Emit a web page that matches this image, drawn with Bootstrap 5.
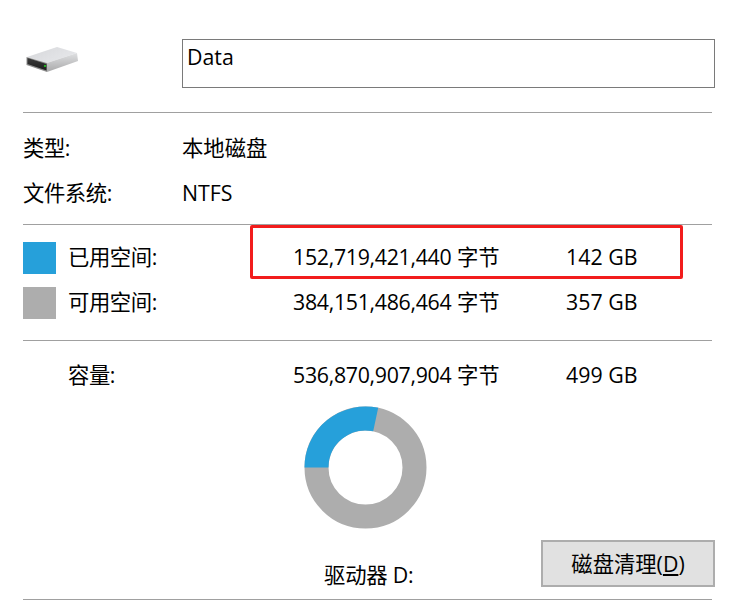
<!DOCTYPE html>
<html lang="zh">
<head>
<meta charset="utf-8">
<title>Data</title>
<link href="https://cdn.jsdelivr.net/npm/bootstrap@5.3.0/dist/css/bootstrap.min.css" rel="stylesheet">
<style>
html, body { background: #fff; }
body { font-family: "Open Sans", "Noto Sans CJK SC", sans-serif; font-size: 21.33px; color: #000; margin: 0; width: 738px; height: 604px; overflow: hidden; line-height: 1; }
.sheet { position: relative; padding: 39px 23px 0 23px; width: 738px; }
.rule { height: 1px; background: #a0a0a0; width: 689px; }
.head-row { height: 49px; margin-bottom: 24px; }
.icon-cell { width: 159px; flex: none; }
.drive-art { filter: blur(0.4px); }
.name-box { width: 533px; height: 49px; flex: none; border: 1px solid #7a7a7a; padding: 5px 0 0 4px; line-height: 24px; }
.info-block { padding: 12px 0 9px; }
.info-line { height: 45px; }
.info-key { width: 159px; flex: none; }
.tight-label { letter-spacing: -0.4px; }
.space-block { padding: 10px 0 15px; }
.space-line { height: 45px; }
.swatch { width: 33px; height: 32px; flex: none; margin: 1px 12px 0 0; }
.swatch-used { background: #26a0da; }
.swatch-free { background: #adadad; }
.space-key { width: 225px; flex: none; }
.space-bytes { width: 273px; flex: none; }
.lift-text { padding-bottom: 2px; }
.digits { letter-spacing: -0.3px; }
.cap-line { height: 68px; padding-left: 45px; }
.donut-wrap { height: 123px; padding-left: 281px; margin-top: -3px; }
.foot-row { height: 70px; padding-bottom: 12px; }
.drive-name { width: 518px; flex: none; padding-left: 301px; padding-bottom: 2px; letter-spacing: -0.2px; }
.clean-btn { width: 174px; height: 47px; flex: none; border: 2px solid #adadad; background: #e1e1e1; border-radius: 0; font-size: 21.33px; color: #000; padding: 0; font-family: inherit; line-height: 1; }
.red-mark { position: absolute; left: 250px; top: 225px; width: 433px; height: 54px; border: 3px solid #f21c1c; border-radius: 2px; pointer-events: none; }
</style>
</head>
<body>
<div class="sheet">
  <div class="d-flex head-row">
    <div class="icon-cell d-flex">
      <svg class="drive-art" width="60" height="36" viewBox="23 45 60 36" aria-hidden="true">
        <defs>
          <linearGradient id="topg" x1="0" y1="0" x2="1" y2="0.6"><stop offset="0" stop-color="#d6d7da"/><stop offset="1" stop-color="#e6e7ea"/></linearGradient>
          <linearGradient id="sideg" x1="0" y1="0" x2="0" y2="1"><stop offset="0" stop-color="#dfe0e2"/><stop offset="1" stop-color="#a9a9aa"/></linearGradient>
          <linearGradient id="frontg" x1="0" y1="0" x2="0" y2="1"><stop offset="0" stop-color="#3a3a3a"/><stop offset="1" stop-color="#1d1d1d"/></linearGradient>
        </defs>
        <polygon points="27,63 57,53 77,59 47,69" fill="url(#topg)"/>
        <polygon points="47,69 77,59 78,67 47,78" fill="url(#sideg)"/>
        <polygon points="26.5,63 47,69 47,78 26.5,71" fill="#8d8d8d"/>
        <polygon points="27.5,64 46.5,70 46.5,76.5 27.5,70" fill="url(#frontg)"/>
        <circle cx="45" cy="72" r="1.1" fill="#1fd11f"/>
      </svg>
    </div>
    <div class="name-box">Data</div>
  </div>
  <div class="rule"></div>
  <div class="info-block">
    <div class="d-flex align-items-center info-line"><div class="info-key tight-label">类型:</div><div>本地磁盘</div></div>
    <div class="d-flex align-items-center info-line"><div class="info-key tight-label">文件系统:</div><div>NTFS</div></div>
  </div>
  <div class="rule"></div>
  <div class="space-block">
    <div class="d-flex align-items-center space-line"><div class="swatch swatch-used"></div><div class="space-key tight-label lift-text">已用空间:</div><div class="space-bytes lift-text"><span class="digits">152,719,421,440</span> 字节</div><div class="lift-text">142 GB</div></div>
    <div class="d-flex align-items-center space-line"><div class="swatch swatch-free"></div><div class="space-key tight-label lift-text">可用空间:</div><div class="space-bytes lift-text"><span class="digits">384,151,486,464</span> 字节</div><div class="lift-text">357 GB</div></div>
  </div>
  <div class="rule"></div>
  <div class="d-flex align-items-center cap-line"><div class="space-key tight-label">容量:</div><div class="space-bytes"><span class="digits">536,870,907,904</span> 字节</div><div>499 GB</div></div>
  <div class="donut-wrap">
    <svg class="d-block" width="123" height="123" viewBox="0 0 123 123" aria-hidden="true">
      <circle cx="61.5" cy="61.5" r="49" fill="none" stroke="#adadad" stroke-width="24"/>
      <path d="M12.5 61.5A49 49 0 0 1 71.7 13.6" fill="none" stroke="#26a0da" stroke-width="24"/>
    </svg>
  </div>
  <div class="d-flex foot-row align-items-end">
    <div class="drive-name">驱动器 D:</div>
    <button type="button" class="btn clean-btn">磁盘清理(<u>D</u>)</button>
  </div>
  <div class="rule"></div>
  <div class="red-mark"></div>
</div>
</body>
</html>
